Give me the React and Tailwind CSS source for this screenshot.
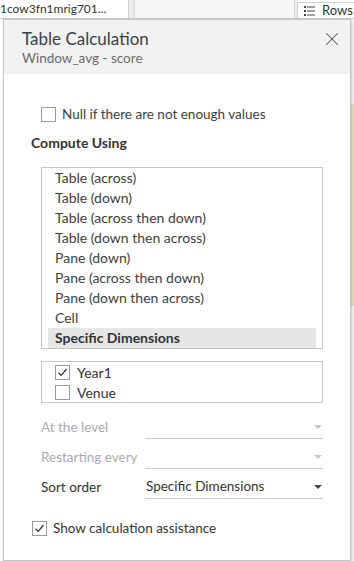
import { X } from 'lucide-react';

const methods = [
  'Table (across)',
  'Table (down)',
  'Table (across then down)',
  'Table (down then across)',
  'Pane (down)',
  'Pane (across then down)',
  'Pane (down then across)',
  'Cell',
];

const Check = ({ checked }) => (
  <span className="w-[15px] h-[15px] border border-[#9a9a9a] bg-white flex items-center justify-center shrink-0">
    {checked && (
      <svg width="11" height="11" viewBox="0 0 11 11">
        <path d="M1.5 5.8 L4.2 8.4 L9.5 2" fill="none" stroke="#333" strokeWidth="1.3" />
      </svg>
    )}
  </span>
);

const Caret = ({ disabled }) => (
  <svg width="8" height="4" viewBox="0 0 8 4" className="shrink-0">
    <path d="M0 0 L8 0 L4 4 Z" fill={disabled ? '#c8c8c8' : '#444'} />
  </svg>
);

const Field = ({ label, value, disabled }) => (
  <div className="flex items-end">
    <div className={`w-[104px] h-[24px] flex items-center ${disabled ? 'text-[#ababab]' : 'text-[#333]'}`}>{label}</div>
    <div className="flex-1 h-[24px] border-b border-[#c9c9c9] flex items-center justify-between pl-[1px] pr-[1px]">
      <span className="text-[#333]">{value}</span>
      <Caret disabled={disabled} />
    </div>
  </div>
);

const App = () => {
  return (
    <div className="relative w-[354px] h-[561px] overflow-hidden bg-white text-[13.5px] font-['Lato','Liberation_Sans',sans-serif]">
      {/* workbook behind the dialog */}
      <div className="flex h-[19px] border-b border-[#cfcfcf]">
        <div className="w-[129px] bg-white border-r border-[#cfcfcf] text-[12px] text-[#333] leading-[17px] whitespace-nowrap overflow-hidden">
          1cow3fn1mrig701...
        </div>
        <div className="w-[6px] bg-[#ededed] border-r border-[#d6d6d6]" />
        <div className="w-[160px] bg-[#f8f8f8] border-r border-[#d6d6d6]" />
        <div className="w-[2px] bg-[#ededed]" />
        <div className="flex-1 bg-white border-l border-t border-[#cfcfcf] mt-[2px] flex items-center gap-[7px] pl-[6px] text-[#333] text-[13px]">
          <svg width="11" height="10" viewBox="0 0 11 10">
            <rect x="0" y="0" width="2" height="2" fill="#444" />
            <rect x="3" y="0.5" width="8" height="1" fill="#444" />
            <rect x="0" y="4" width="2" height="2" fill="#444" />
            <rect x="3" y="4.5" width="8" height="1" fill="#444" />
            <rect x="0" y="8" width="2" height="2" fill="#444" />
            <rect x="3" y="8.5" width="8" height="1" fill="#444" />
          </svg>
          Rows
        </div>
      </div>
      <div className="absolute right-0 top-[104px] w-[3px] h-[202px] bg-[#e9e6c4]" />

      {/* dialog */}
      <div className="absolute left-[3px] top-[19px] w-[348px] bottom-0 bg-white border border-[#c6c6c6] shadow-[1px_1px_3px_rgba(0,0,0,0.25)]">
        <div className="h-[54px] bg-[#f2f2f2] flex justify-between pl-[18px] pr-[7px] pt-[9px]">
          <div>
            <div className="text-[17px] leading-[20px] text-[#404040]">Table Calculation</div>
            <div className="text-[13.5px] leading-[17px] text-[#6b6b6b] mt-[1px]">Window_avg - score</div>
          </div>
          <X size={22} strokeWidth={1.1} className="text-[#555] -mt-[1px]" />
        </div>

        <div className="pl-[27px] pr-[27px] text-[#333]">
          <div className="flex items-center gap-[6px] pl-[10px] mt-[32px] h-[16px]">
            <Check />
            <span className="text-[#404040]">Null if there are not enough values</span>
          </div>

          <div className="font-bold text-[14px] mt-[13px] h-[16px] leading-[16px]">Compute Using</div>

          <div className="ml-[10px] mt-[16px] border border-[#c6c6c6] h-[182px] text-[14px]">
            {methods.map((m) => (
              <div key={m} className="h-[20px] leading-[20px] px-[13px] text-[#404040]">{m}</div>
            ))}
            <div className="h-[20px] leading-[20px] mx-[6px] px-[7px] bg-[#e6e6e6] font-bold">Specific Dimensions</div>
          </div>

          <div className="ml-[10px] mt-[12px] border border-[#c6c6c6] h-[42px] text-[14px]">
            <div className="h-[20px] flex items-center gap-[7px] pl-[13px]">
              <Check checked />
              <span>Year1</span>
            </div>
            <div className="h-[20px] flex items-center gap-[7px] pl-[13px]">
              <Check />
              <span>Venue</span>
            </div>
          </div>

          <div className="ml-[10px] mt-[12px] flex flex-col gap-[6px]">
            <Field label="At the level" disabled />
            <Field label="Restarting every" disabled />
            <Field label="Sort order" value="Specific Dimensions" />
          </div>

          <div className="flex items-center gap-[6px] pl-[1px] mt-[21px] h-[16px]">
            <Check checked />
            <span>Show calculation assistance</span>
          </div>
        </div>
      </div>
    </div>
  );
};

export default App;
